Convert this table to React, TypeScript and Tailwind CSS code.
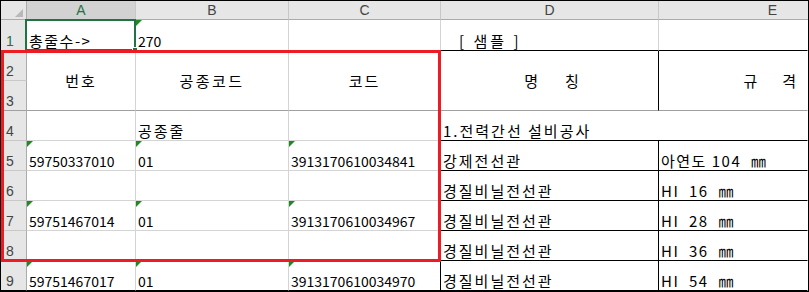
import React from 'react';

const KR = "font-['Noto_Sans_CJK_KR',sans-serif] text-[15px] leading-none text-black";
const NUM = 'text-[14px]';
const WIDE = 'tracking-[2px] whitespace-pre';

const Flag = () => (
  <svg className="absolute left-0 top-0" width="6" height="6" viewBox="0 0 6 6">
    <polygon points="0,0 6,0 0,6" fill="#1f8a1f" />
  </svg>
);

type CellProps = {
  r?: string;
  b?: string;
  className?: string;
  flag?: boolean;
  children?: React.ReactNode;
};

const Cell: React.FC<CellProps> = ({ r = 'border-r-[#d4d4d4]', b = 'border-b-[#d4d4d4]', className = 'items-end pl-[2px] pb-[2px]', flag, children }) => (
  <div className={`relative flex border-r border-b ${r} ${b} ${KR} ${className}`}>
    {flag && <Flag />}
    {children}
  </div>
);

const RowHead: React.FC<{ n: number; active?: boolean; b?: string }> = ({ n, active, b = 'border-b-[#c8c8c8]' }) => (
  <div className={`flex items-end pl-[5px] pb-[2px] bg-[#e6e6e6] border-r border-b border-r-[#ababab] ${b} font-['Liberation_Sans',sans-serif] text-[14px] leading-none ${active ? 'text-[#217346]' : 'text-[#444]'}`}>
    {n}
  </div>
);

const ColHead: React.FC<{ label: string; active?: boolean; last?: boolean }> = ({ label, active, last }) => (
  <div className={`flex items-center justify-center border-b border-b-[#ababab] ${last ? 'pl-[78px]' : 'border-r border-r-[#c8c8c8]'} font-['Liberation_Sans',sans-serif] text-[14px] leading-none ${active ? 'bg-[#d2d2d2] text-[#217346]' : 'bg-[#e6e6e6] text-[#444]'}`}>
    {label}
  </div>
);

const CENTER = 'items-center justify-center';
const FREEZE = 'border-b-[#a0a0a0]';

export default function App() {
  const data = [
    { row: 5, a: '59750337010', bb: '01', c: '3913170610034841', d: '강제전선관', e: '아연도 104  ㎜' },
    { row: 6, a: '', bb: '', c: '', d: '경질비닐전선관', e: 'HI  16  ㎜' },
    { row: 7, a: '59751467014', bb: '01', c: '3913170610034967', d: '경질비닐전선관', e: 'HI  28  ㎜' },
    { row: 8, a: '', bb: '', c: '', d: '경질비닐전선관', e: 'HI  36  ㎜' },
    { row: 9, a: '59751467017', bb: '01', c: '3913170610034970', d: '경질비닐전선관', e: 'HI  54  ㎜' },
  ];

  return (
    <div className="relative w-[809px] h-[292px] overflow-hidden border border-black bg-white">
      <div className="grid grid-cols-[26px_109px_153px_152px_218px_1fr] grid-rows-[19px_31px_repeat(8,30px)] h-full">
        {/* column headers */}
        <div className="flex items-end justify-end pr-[3px] pb-[2px] bg-[#e6e6e6] border-r border-b border-r-[#ababab] border-b-[#ababab]">
          <svg width="8" height="8" viewBox="0 0 8 8">
            <polygon points="8,0 8,8 0,8" fill="#b8b8b8" />
          </svg>
        </div>
        <ColHead label="A" active />
        <ColHead label="B" />
        <ColHead label="C" />
        <ColHead label="D" />
        <ColHead label="E" last />

        {/* row 1 */}
        <RowHead n={1} active />
        <Cell><span className="tracking-[1.5px]">총줄수-&gt;</span></Cell>
        <Cell flag><span className={NUM}>270</span></Cell>
        <Cell />
        <Cell b="border-b-black" className="items-end pl-[18px] pb-[2px]">
          <span className="tracking-[3px] whitespace-pre">[ 샘플 ]</span>
        </Cell>
        <Cell r="border-r-transparent" b="border-b-black" />

        {/* rows 2-3 (merged headers) */}
        <RowHead n={2} />
        <Cell b={FREEZE} className={`row-span-2 ${CENTER}`}>
          <span className="tracking-[2px]">번호</span>
        </Cell>
        <Cell b={FREEZE} className={`row-span-2 ${CENTER}`}>
          <span className="tracking-[2.5px]">공종코드</span>
        </Cell>
        <Cell r="border-r-black" b={FREEZE} className={`row-span-2 ${CENTER}`}>
          <span className="tracking-[2px]">코드</span>
        </Cell>
        <Cell r="border-r-black" b={FREEZE} className={`row-span-2 ${CENTER} gap-[27px] pl-[4px]`}>
          <span>명</span>
          <span>칭</span>
        </Cell>
        <Cell r="border-r-transparent" b={FREEZE} className="row-span-2 items-center justify-end pr-[11px] gap-[25px]">
          <span>규</span>
          <span>격</span>
        </Cell>
        <RowHead n={3} b="border-b-[#a0a0a0]" />

        {/* row 4 */}
        <RowHead n={4} />
        <Cell />
        <Cell><span className={WIDE}>공종줄</span></Cell>
        <Cell r="border-r-black" />
        <Cell r="border-r-transparent" b="border-b-black" className="col-span-2 items-end pl-[2px] pb-[2px]">
          <span className={WIDE}>1.전력간선 설비공사</span>
        </Cell>

        {/* rows 5-9 */}
        {data.map((d) => {
          const last = d.row === 9;
          const gb = last ? 'border-b-black' : 'border-b-[#d4d4d4]';
          return (
            <React.Fragment key={d.row}>
              <RowHead n={d.row} b={last ? 'border-b-black' : 'border-b-[#c8c8c8]'} />
              <Cell b={gb} flag={!!d.a}><span className={NUM}>{d.a}</span></Cell>
              <Cell b={gb} flag={!!d.bb}><span className={NUM}>{d.bb}</span></Cell>
              <Cell r="border-r-black" b={gb} flag={!!d.c}><span className={NUM}>{d.c}</span></Cell>
              <Cell r="border-r-black" b="border-b-black"><span className={WIDE}>{d.d}</span></Cell>
              <Cell r="border-r-transparent" b="border-b-black">
                <span className="tracking-[1.5px] whitespace-pre">{d.e}</span>
              </Cell>
            </React.Fragment>
          );
        })}
      </div>

      {/* active cell A1 */}
      <div className="absolute left-[24px] top-[18px] w-[111px] h-[32px] border-2 border-[#217346]" />
      <div className="absolute left-[131px] top-[46px] w-[6px] h-[6px] bg-[#217346] border border-white" />

      {/* red highlight */}
      <div className="absolute left-0 top-[49px] w-[440px] h-[212px] border-[3px] border-[#ed1c24]" />
    </div>
  );
}
